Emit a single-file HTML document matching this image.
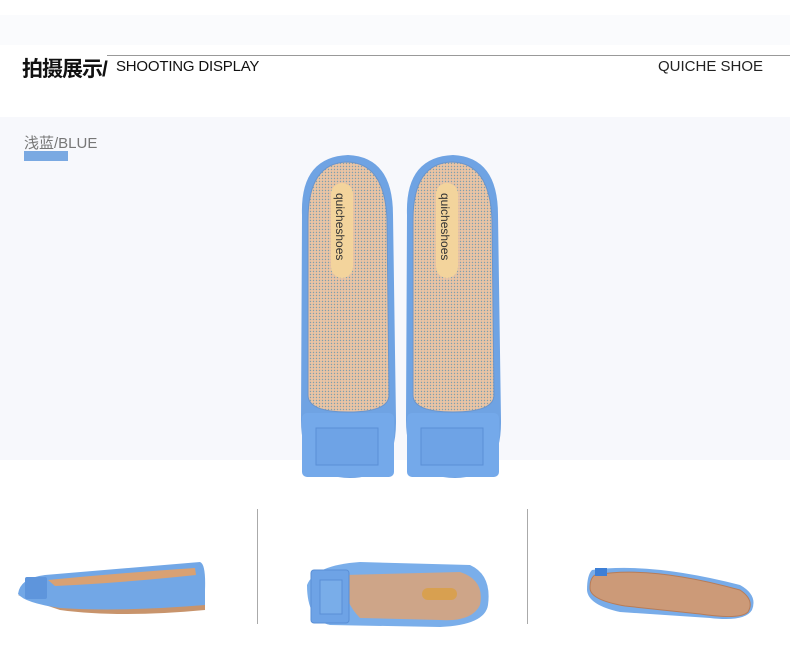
<!DOCTYPE html>
<html><head><meta charset="utf-8"><style>
body{margin:0;width:790px;height:671px;background:#fff;position:relative;overflow:hidden;font-family:"Liberation Sans","Noto Sans CJK SC",sans-serif}
.a{position:absolute}
</style></head><body>
<div class="a" style="left:0;top:15px;width:790px;height:30px;background:#fafbfd"></div>
<div class="a" style="left:107px;top:55px;width:683px;height:1px;background:#999"></div>
<div class="a" style="left:22px;top:53px;font-size:21px;color:#111;font-weight:bold;letter-spacing:-1px">拍摄展示/</div>
<div class="a" style="left:116px;top:58px;font-size:15px;color:#111;letter-spacing:-0.2px">SHOOTING DISPLAY</div>
<div class="a" style="left:658px;top:58px;font-size:15px;color:#222">QUICHE SHOE</div>
<div class="a" style="left:0;top:117px;width:790px;height:343px;background:#f7f8fc"></div>
<div class="a" style="left:24px;top:132px;font-size:15px;color:#777">浅蓝/BLUE</div>
<div class="a" style="left:24px;top:151px;width:44px;height:10px;background:#7aa9e2"></div>
<svg class="a" style="left:0;top:0" width="790" height="671">
<defs>
<pattern id="d" width="3" height="3" patternUnits="userSpaceOnUse"><rect width="3" height="3" fill="#eac4a4"/><circle cx="1.5" cy="1.5" r="0.7" fill="#7f9fae"/></pattern>
</defs>
<g id="s">
<path d="M302 215 Q300 157 348 155 Q393 157 393 215 L396 420 Q397 478 350 478 Q301 478 301 420 Z" fill="#6fa3e3"/>
<path d="M308 220 Q308 163 347 162 Q385 163 387 220 L389 395 Q389 412 348 412 Q308 412 308 395 Z" fill="url(#d)" stroke="#6a95cc"/>
<rect x="331" y="183" width="22" height="95" rx="11" fill="#f3d49c"/>
<text transform="translate(336 193) rotate(90)" font-size="12" fill="#333" font-family="Liberation Sans">quicheshoes</text>
<rect x="302" y="413" width="92" height="64" rx="5" fill="#74a9ea"/>
<rect x="316" y="428" width="62" height="37" fill="#6ea3e6" stroke="#5a8fd6"/>
</g>
<use href="#s" x="105"/>
<line x1="257.5" y1="509" x2="257.5" y2="624" stroke="#aaa"/>
<line x1="527.5" y1="509" x2="527.5" y2="624" stroke="#aaa"/>
<path d="M18 595 Q30 600 60 610 Q120 618 205 610 L205 600 L25 595 Z" fill="#c8946c"/>
<path d="M18 594 Q20 578 45 575 L200 562 Q206 564 205 590 L205 605 Q120 612 60 608 Q25 603 18 594 Z" fill="#72a7e6"/>
<path d="M48 580 Q120 573 195 568 L196 575 Q120 583 55 586 Z" fill="#d9a173"/>
<rect x="25" y="577" width="22" height="22" rx="2" fill="#5e95dc"/>
<path d="M307 585 Q315 565 360 562 L470 565 Q492 575 488 605 Q485 625 440 627 L330 625 Q307 620 307 585 Z" fill="#7aaeea"/>
<path d="M345 575 L460 572 Q485 580 480 605 Q472 622 440 620 L360 618 Q342 600 345 575 Z" fill="#cea588"/>
<rect x="422" y="588" width="35" height="12" rx="6" fill="#d8a050"/>
<rect x="311" y="570" width="38" height="53" rx="3" fill="#6ea3e6" stroke="#5a8fd6"/>
<rect x="320" y="580" width="22" height="34" fill="#79ade9" stroke="#5a8fd6"/>
<path d="M592 570 Q650 562 740 585 Q758 595 752 610 Q745 622 710 618 L620 612 Q588 605 587 590 Q587 575 592 570 Z" fill="#78ace9"/>
<path d="M595 575 Q650 565 740 590 Q755 600 748 612 Q740 620 700 614 L625 606 Q590 600 590 588 Q590 578 595 575 Z" fill="#cc9a78" stroke="#b77c58"/>
<rect x="595" y="568" width="12" height="8" fill="#3d7fd6"/>
</svg>
</body></html>
